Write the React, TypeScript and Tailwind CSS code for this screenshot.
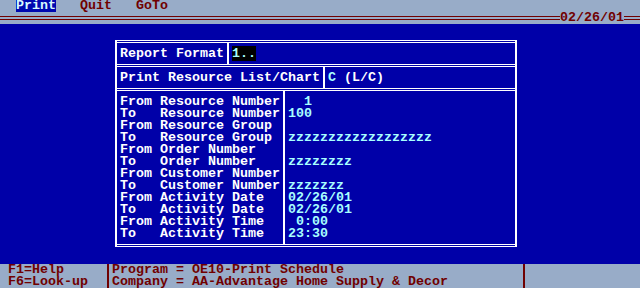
import React from "react";

// screen colours, old DOS style
const rows: [string, string][] = [
  ["From Resource Number", "  1"],
  ["To   Resource Number", "100"],
  ["From Resource Group", ""],
  ["To   Resource Group", "zzzzzzzzzzzzzzzzzz"],
  ["From Order Number", ""],
  ["To   Order Number", "zzzzzzzz"],
  ["From Customer Number", ""],
  ["To   Customer Number", "zzzzzzz"],
  ["From Activity Date", "02/26/01"],
  ["To   Activity Date", "02/26/01"],
  ["From Activity Time", " 0:00"],
  ["To   Activity Time", "23:30"],
];

const DoubleLine = () => <div className="h-[3px] border-y border-white" />;

export default function App() {
  return (
    <div className="w-[640px] h-[288px] bg-[#0000a8] flex flex-col whitespace-pre font-['Liberation_Mono',monospace] text-[13.333px] leading-[12px] font-bold overflow-hidden">
      {/* menu bar */}
      <div className="h-[24px] bg-[#98acc8] text-[#700000]">
        <div className="h-[12px] flex">
          <span className="ml-[16px] bg-[#0008b0] text-[#d8f8ff]">Print</span>
          <span className="ml-[24px]">Quit</span>
          <span className="ml-[24px]">GoTo</span>
        </div>
        <div className="h-[12px] flex items-start">
          <div className="flex-1 mt-[4px] h-[4px] border-y border-[#700000]" />
          <span className="w-[64px]">02/26/01</span>
          <div className="w-[16px] mt-[4px] h-[4px] border-y border-[#700000]" />
        </div>
      </div>

      {/* main */}
      <div className="h-[240px] pt-[16px]">
        <div className="ml-[115px] w-[402px] border-x-2 border-white text-white">
          <DoubleLine />
          <div className="flex h-[21px]">
            <div className="w-[112px] border-r-2 border-white pt-[5px] pl-[3px]">Report Format</div>
            <div className="pt-[5px] pl-[3px]">
              <span className="bg-black text-[#a8ffff]">1..</span>
            </div>
          </div>
          <DoubleLine />
          <div className="flex h-[21px]">
            <div className="w-[208px] border-r-2 border-white pt-[5px] pl-[3px]">Print Resource List/Chart</div>
            <div className="pt-[5px] pl-[3px]">
              <span className="text-[#a8ffff]">C</span> (L/C)
            </div>
          </div>
          <DoubleLine />
          <div className="flex h-[153px]">
            <div className="w-[168px] border-r-2 border-white pt-[5px] pl-[3px]">
              {rows.map(([label]) => (
                <div key={label} className="h-[12px]">{label}</div>
              ))}
            </div>
            <div className="pt-[5px] pl-[3px] text-[#a8ffff]">
              {rows.map(([label, value]) => (
                <div key={label} className="h-[12px]">{value}</div>
              ))}
            </div>
          </div>
          <DoubleLine />
        </div>
      </div>

      {/* status bar */}
      <div className="h-[24px] bg-[#98acc8] text-[#700000] flex">
        <div className="w-[107px] pl-[8px]">
          <div className="h-[12px]">F1=Help</div>
          <div className="h-[12px]">F6=Look-up</div>
        </div>
        <div className="w-[2px] bg-[#700000]" />
        <div className="w-[414px] pl-[3px]">
          <div className="h-[12px]">Program = OE10-Print Schedule</div>
          <div className="h-[12px]">Company = AA-Advantage Home Supply &amp; Decor</div>
        </div>
        <div className="w-[2px] bg-[#700000]" />
      </div>
    </div>
  );
}
